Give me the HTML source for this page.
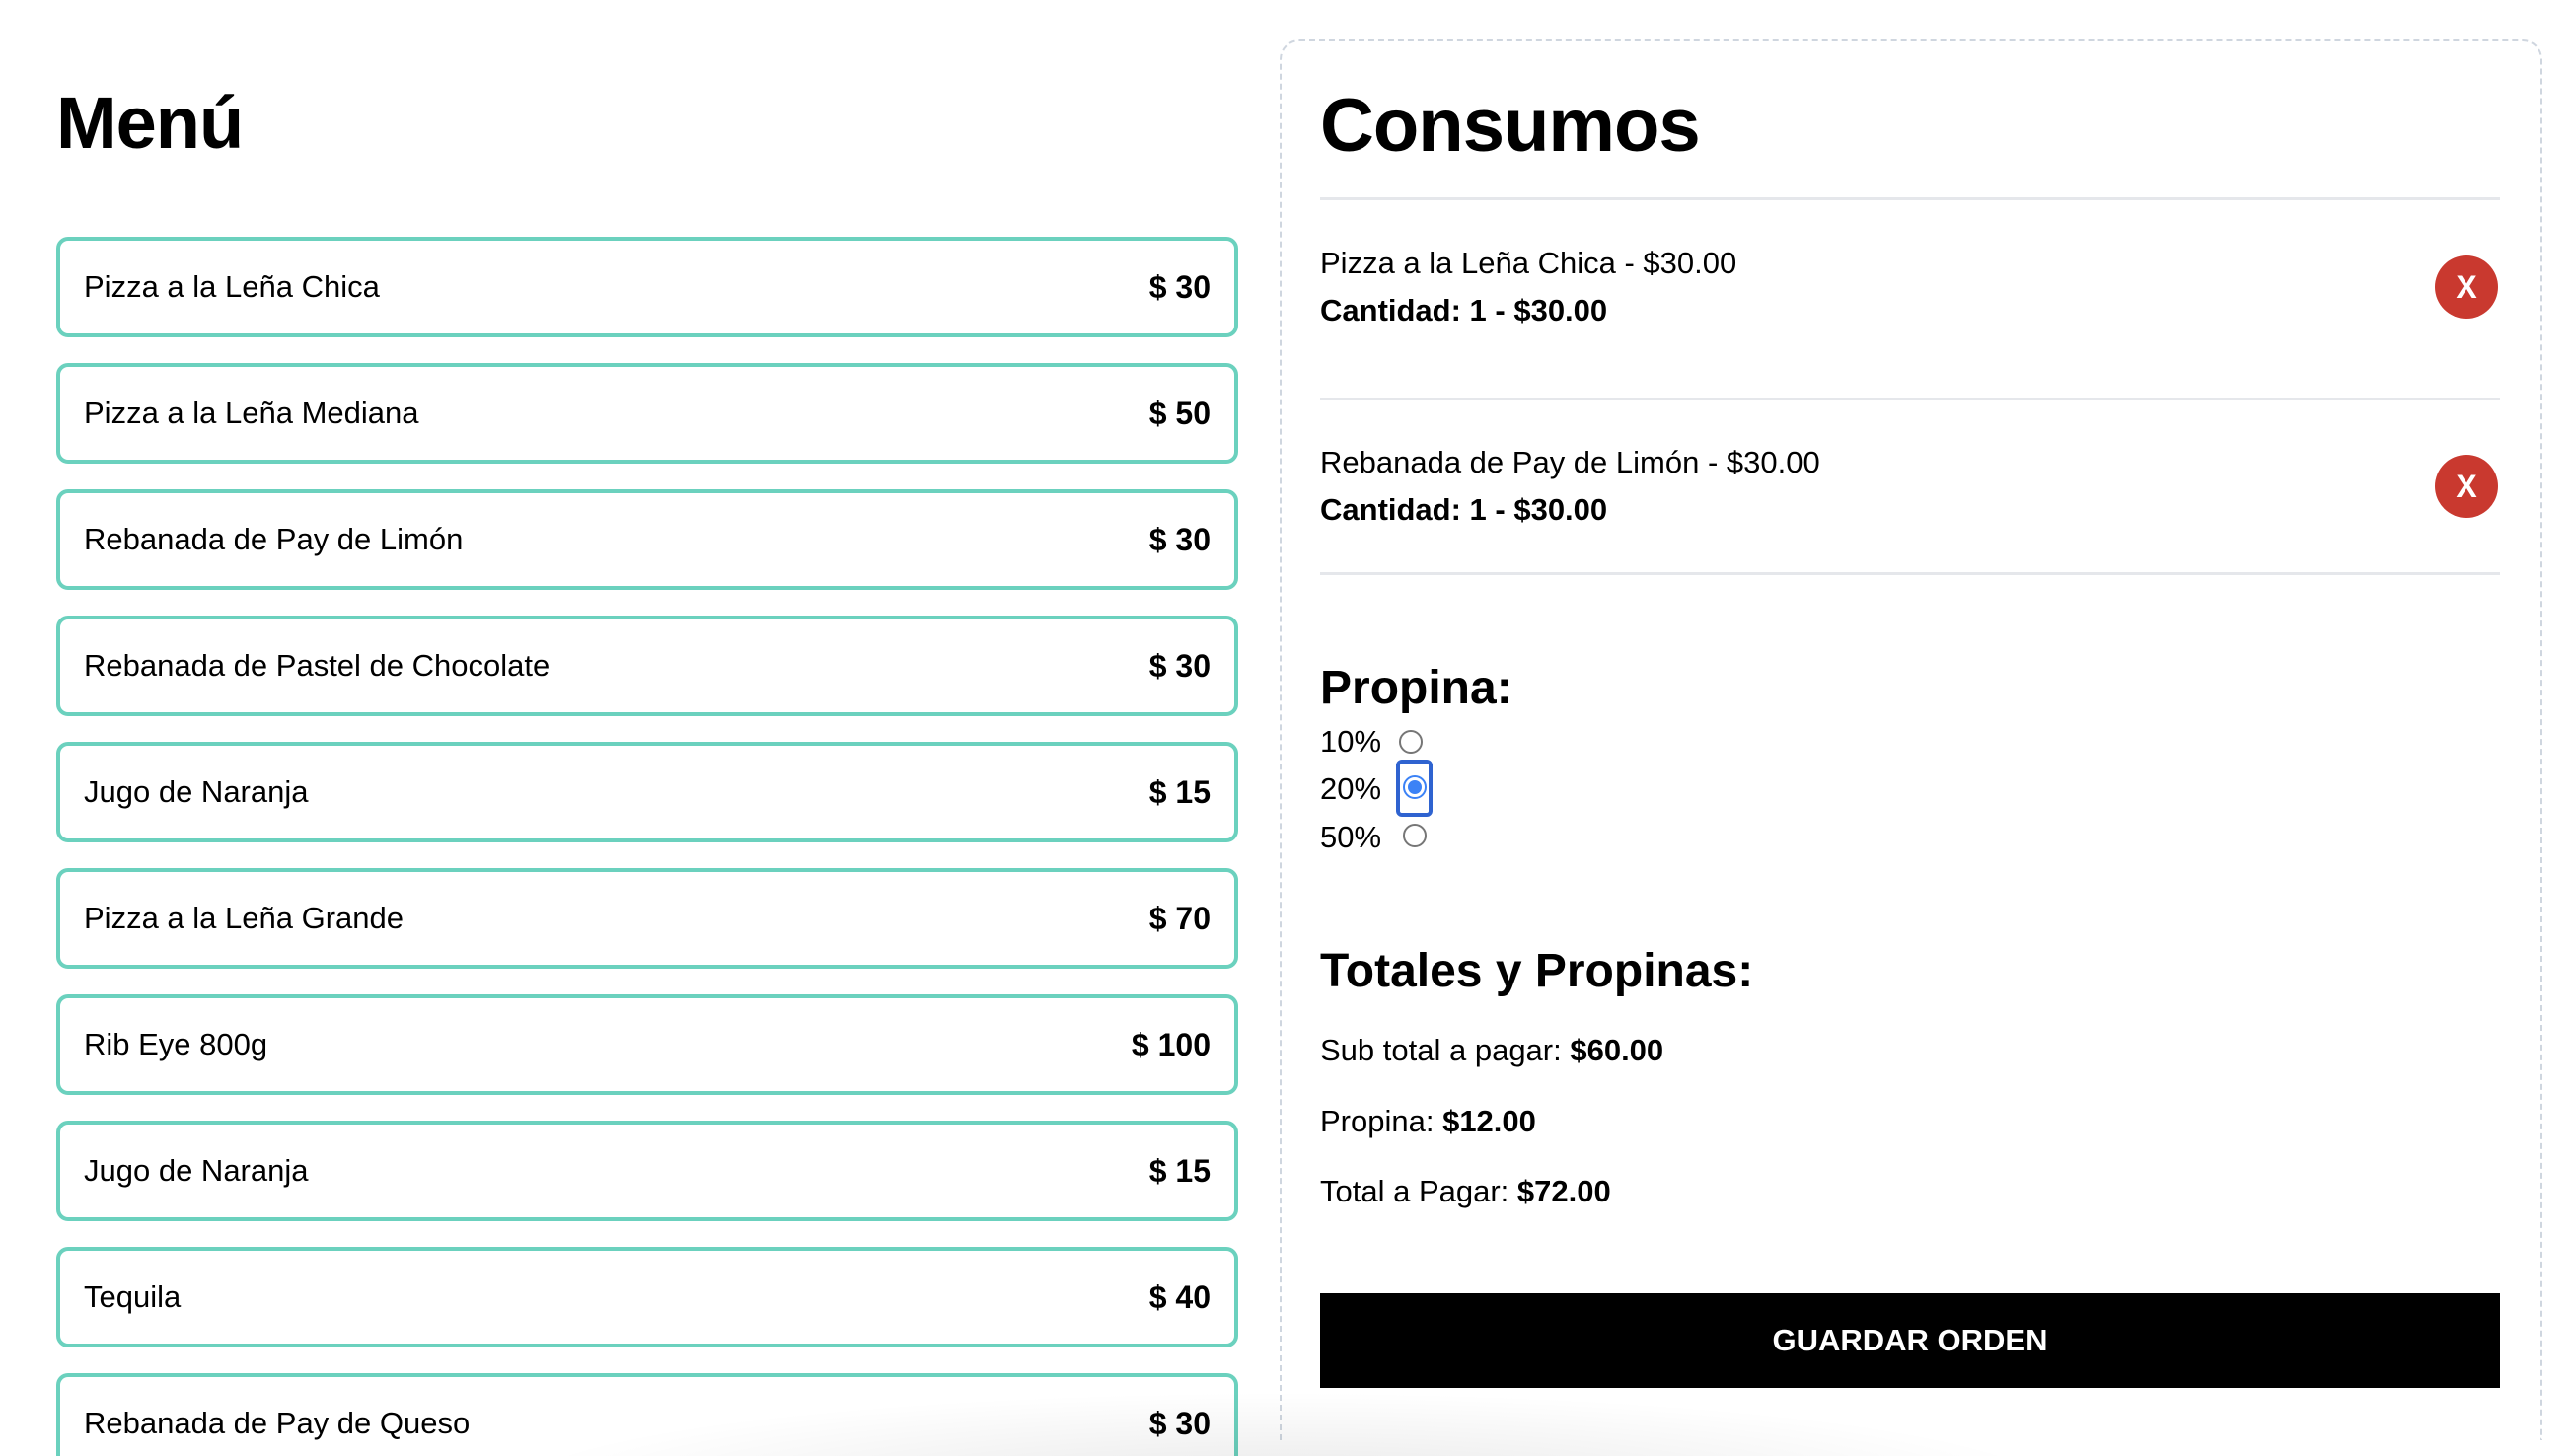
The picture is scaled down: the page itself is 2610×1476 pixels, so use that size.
<!DOCTYPE html>
<html style="width:2610px;height:1476px;overflow:hidden"><head><meta charset="utf-8"><style>
*{margin:0;padding:0;box-sizing:border-box}
body{width:2610px;height:1476px;overflow:hidden;background:#fff;font-family:"Liberation Sans",Arial,sans-serif;color:#000;position:relative}
.a{position:absolute;white-space:nowrap}
h1{position:absolute;font-weight:900;font-size:74px;letter-spacing:-1px;line-height:1}
.item{position:absolute;left:57px;width:1198px;height:102px;border:4px solid #6bd1be;border-radius:12px}
.item .n{position:absolute;left:24px;top:0;line-height:94px;font-size:31px}
.item .p{position:absolute;right:24px;top:0;line-height:94px;font-size:32px;font-weight:700}
.panel{position:absolute;left:1297px;top:40px;width:1280px;height:1420px;border:2px dashed #cfd6df;border-bottom:none;border-radius:20px 20px 0 0}
.hr{position:absolute;left:1338px;width:1196px;height:3px;background:#e5e7eb}
.t{font-size:31px}
.b{font-size:31px;font-weight:700}
.x{position:absolute;width:64px;height:64px;border-radius:50%;background:#c9392f;color:#fff;font-weight:700;font-size:32px;text-align:center;line-height:64px}
.r{position:absolute;width:24px;height:24px;border:2px solid #767676;border-radius:50%;background:#fff}
</style></head><body>
<h1 style="left:57px;top:88px">Menú</h1>

<div class="item" style="top:240px"><span class="n">Pizza a la Leña Chica</span><span class="p">$ 30</span></div>
<div class="item" style="top:368px"><span class="n">Pizza a la Leña Mediana</span><span class="p">$ 50</span></div>
<div class="item" style="top:496px"><span class="n">Rebanada de Pay de Limón</span><span class="p">$ 30</span></div>
<div class="item" style="top:624px"><span class="n">Rebanada de Pastel de Chocolate</span><span class="p">$ 30</span></div>
<div class="item" style="top:752px"><span class="n">Jugo de Naranja</span><span class="p">$ 15</span></div>
<div class="item" style="top:880px"><span class="n">Pizza a la Leña Grande</span><span class="p">$ 70</span></div>
<div class="item" style="top:1008px"><span class="n">Rib Eye 800g</span><span class="p">$ 100</span></div>
<div class="item" style="top:1136px"><span class="n">Jugo de Naranja</span><span class="p">$ 15</span></div>
<div class="item" style="top:1264px"><span class="n">Tequila</span><span class="p">$ 40</span></div>
<div class="item" style="top:1392px;height:84px;border-bottom:none;border-radius:12px 12px 0 0"><span class="n">Rebanada de Pay de Queso</span><span class="p">$ 30</span></div>

<div class="panel"></div>
<h1 style="left:1338px;top:90px;font-size:76px">Consumos</h1>
<div class="hr" style="top:200px"></div>

<div class="a t" style="left:1338px;top:249px">Pizza a la Leña Chica - $30.00</div>
<div class="a b" style="left:1338px;top:297px">Cantidad: 1 - $30.00</div>
<div class="x" style="left:2468px;top:259px">X</div>
<div class="hr" style="top:403px"></div>

<div class="a t" style="left:1338px;top:451px">Rebanada de Pay de Limón - $30.00</div>
<div class="a b" style="left:1338px;top:499px">Cantidad: 1 - $30.00</div>
<div class="x" style="left:2468px;top:461px">X</div>
<div class="hr" style="top:580px"></div>

<div class="a" style="left:1338px;top:670px;font-size:48px;font-weight:900">Propina:</div>
<div class="a t" style="left:1338px;top:734px">10%</div>
<div class="r" style="left:1418px;top:740px"></div>
<div class="a t" style="left:1338px;top:782px">20%</div>
<div class="a" style="left:1415px;top:770px;width:37px;height:58px;border:4px solid #2f63d0;border-radius:6px"></div>
<div class="r" style="left:1422px;top:786px;border-color:#3b82f6;background:#fff"><div style="position:absolute;left:3px;top:3px;width:14px;height:14px;border-radius:50%;background:#3b82f6"></div></div>
<div class="a t" style="left:1338px;top:831px">50%</div>
<div class="r" style="left:1422px;top:835px"></div>

<div class="a" style="left:1338px;top:957px;font-size:48px;font-weight:900">Totales y Propinas:</div>
<div class="a t" style="left:1338px;top:1047px">Sub total a pagar: <b>$60.00</b></div>
<div class="a t" style="left:1338px;top:1119px">Propina: <b>$12.00</b></div>
<div class="a t" style="left:1338px;top:1190px">Total a Pagar: <b>$72.00</b></div>

<div class="a" style="left:1338px;top:1311px;width:1196px;height:96px;background:#000;color:#fff;font-weight:700;font-size:31px;text-align:center;line-height:96px">GUARDAR ORDEN</div>

<div class="a" style="left:500px;top:1410px;width:1600px;height:66px;overflow:hidden;pointer-events:none"><div style="width:1600px;height:200px;border-radius:50%;background:radial-gradient(ellipse at center,rgba(0,0,0,0.09),rgba(0,0,0,0) 70%)"></div></div>
</body></html>
